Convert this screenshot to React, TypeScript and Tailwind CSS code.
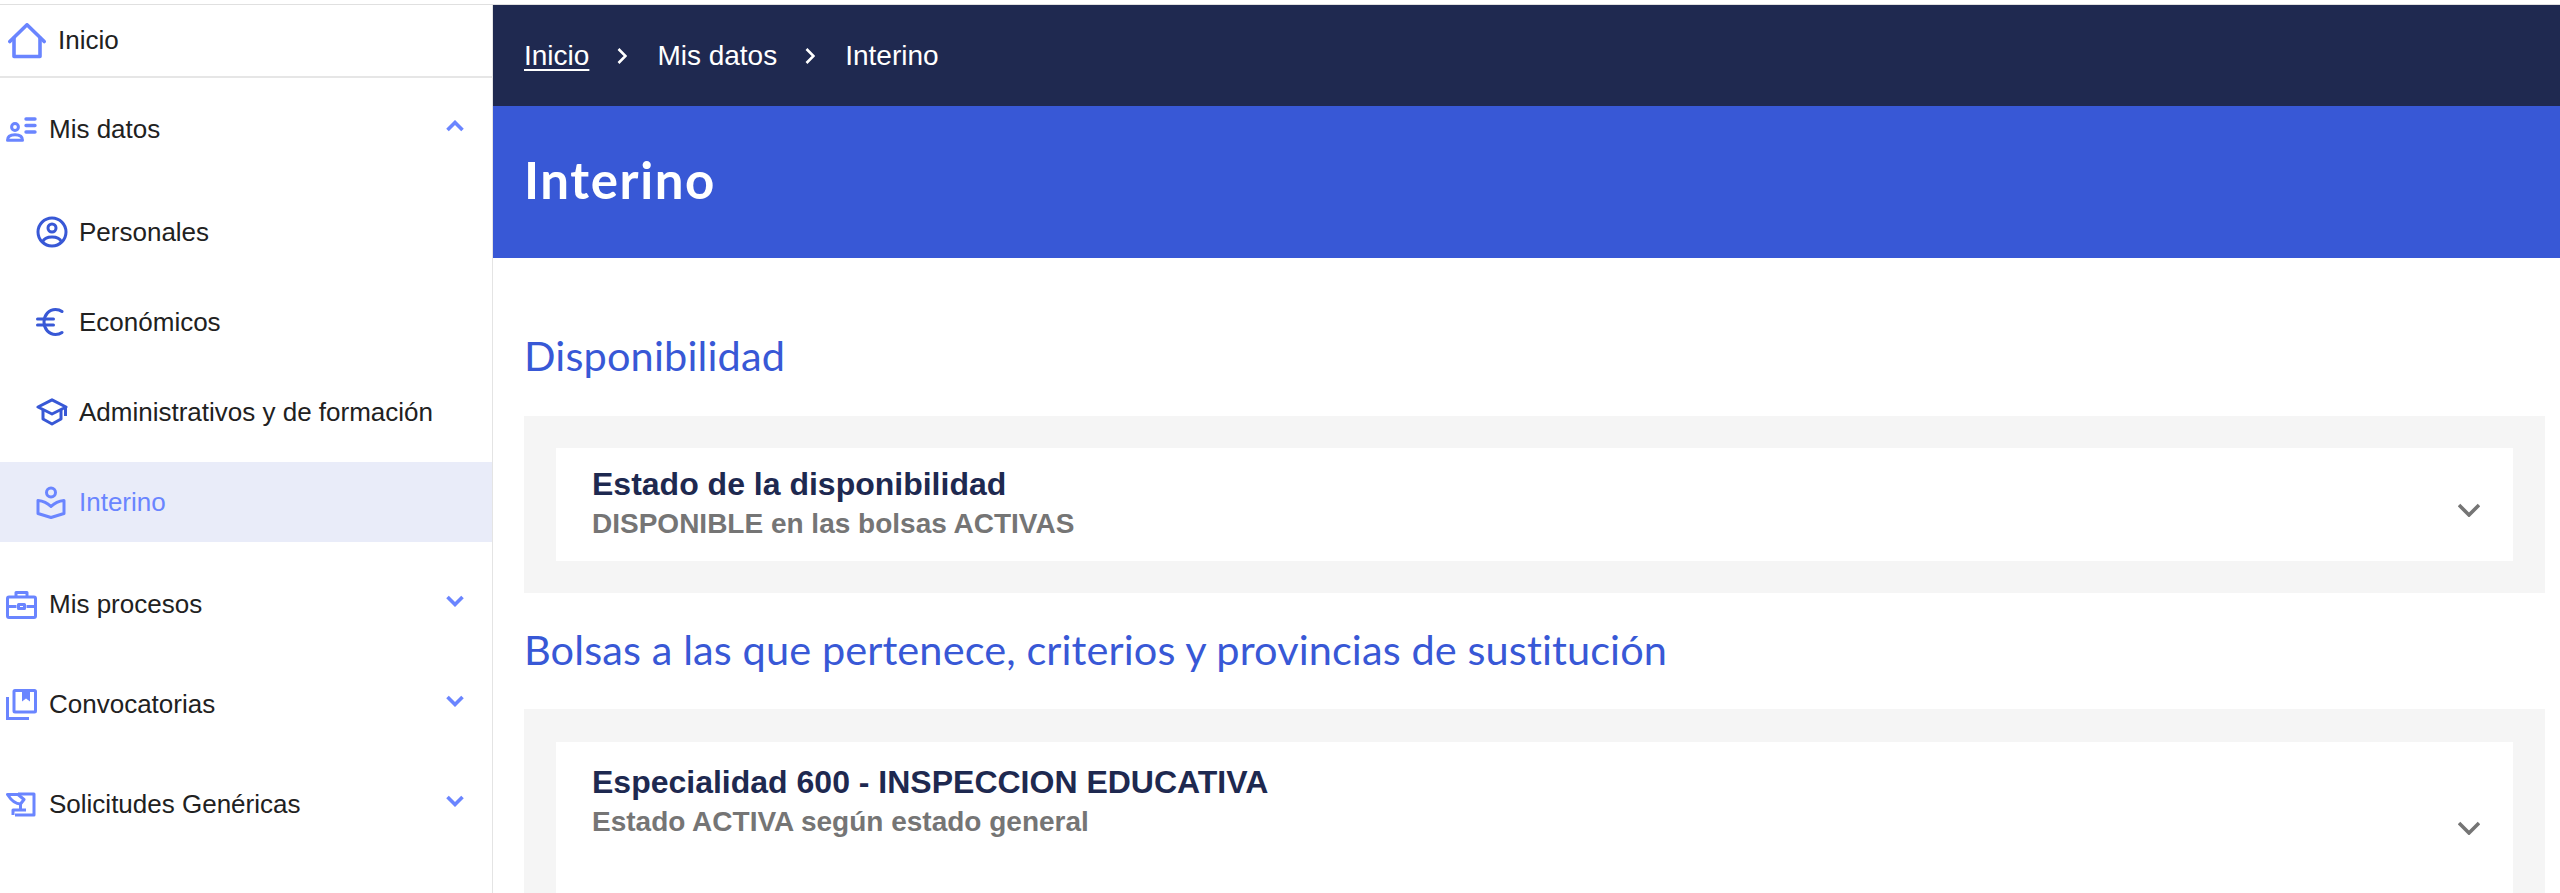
import React from "react";

const Home = () => (
  <svg width="38" height="36" viewBox="0 0 38 36" fill="none" stroke="#6a85ff" strokeWidth="3.600" strokeLinejoin="round" strokeLinecap="round" className="shrink-0">
    <path d="M1.800 18.500 19 1.800 36.200 18.500" />
    <path d="M6 15v18.500h26V15" />
  </svg>
);
const MisDatosIcon = () => (
  <svg width="31" height="25" viewBox="0 0 31 25" fill="none" stroke="#6a85ff" strokeWidth="3" strokeLinecap="round" className="shrink-0">
    <circle cx="9" cy="10" r="3.400" />
    <path d="M1.500 23.300c0-4 3-5.600 7.500-5.600s7.500 1.600 7.500 5.600z" strokeLinejoin="round" />
    <path d="M20 2h9M20 8.500h9M20 15h9" strokeWidth="3.400" />
  </svg>
);
const UserCircle = () => (
  <svg width="32" height="32" viewBox="0 0 32 32" fill="none" stroke="#3858d6" strokeWidth="3" className="shrink-0">
    <circle cx="16" cy="16" r="14" />
    <circle cx="16" cy="12" r="4" />
    <path d="M6.500 26c1.500-3.600 5-5 9.500-5s8 1.400 9.500 5" />
  </svg>
);
const Euro = () => (
  <svg width="28" height="28" viewBox="0 0 28 28" fill="none" stroke="#3858d6" strokeWidth="3" strokeLinecap="round" className="shrink-0">
    <path d="M26 3.500C24 2 22 1.500 19.500 1.500 13 1.500 8 7 8 14s5 12.500 11.500 12.500c2.500 0 4.500-.5 6.500-2" />
    <path d="M1.500 11h16M1.500 17h16" />
  </svg>
);
const Cap = () => (
  <svg width="32" height="28" viewBox="0 0 32 28" fill="none" stroke="#3858d6" strokeWidth="3" strokeLinejoin="round" className="shrink-0">
    <path d="M16 1.800 30 9 16 16 2 9z" />
    <path d="M7 12v9l9 5 9-5v-9" />
    <path d="M29.500 9v9" />
  </svg>
);
const BookUser = () => (
  <svg width="30" height="33" viewBox="0 0 30 33" fill="none" stroke="#6a85ff" strokeWidth="3" strokeLinejoin="round" className="shrink-0">
    <circle cx="15" cy="6.500" r="4.500" />
    <path d="M15 20.500C12 17.500 7 15 2 14.500V27.500L15 31.500L28 27.500V14.500C23 15 18 17.500 15 20.500z" />
  </svg>
);
const Briefcase = () => (
  <svg width="31" height="29" viewBox="0 0 31 29" fill="none" stroke="#6a85ff" strokeWidth="3" strokeLinejoin="round" className="shrink-0">
    <rect x="1.500" y="7" width="28" height="20.500" rx="1.500" />
    <path d="M10 7V2.500h11V7" />
    <path d="M1.500 16.500h9M20.500 16.500h9" />
    <rect x="12.500" y="14.500" width="6" height="4" />
  </svg>
);
const Library = () => (
  <svg width="31" height="31" viewBox="0 0 31 31" fill="none" stroke="#6a85ff" strokeWidth="3" className="shrink-0">
    <rect x="8" y="1.500" width="21.500" height="21.500" rx="1" />
    <path d="M1.500 8v21.500H23" />
    <path d="M16 1.500h8v11l-4-3-4 3z" fill="#6a85ff" stroke="none" />
  </svg>
);
const Solicitud = () => (
  <svg width="30" height="25" viewBox="0 0 30 25" fill="none" stroke="#6a85ff" strokeWidth="3" strokeLinejoin="round" className="shrink-0">
    <path d="M12 2h16v21H9" />
    <path d="M1.500 2.500H12l6 5-3.500 4.500C10 12 5 8 1.500 2.500z" />
    <path d="M14.500 12v6" />
    <path d="M7 23v-5h13" />
  </svg>
);
const Chev = ({ up }: { up?: boolean }) => (
  <svg width="18" height="12" viewBox="0 0 18 12" fill="none" stroke="#6a85ff" strokeWidth="3.600" className={up ? "rotate-180" : ""}>
    <path d="M1.500 2 9 9.500 16.500 2" />
  </svg>
);
const GrayChev = () => (
  <svg width="22" height="14" viewBox="0 0 22 14" fill="none" stroke="#757575" strokeWidth="3.600" className="shrink-0 mt-[11px]">
    <path d="M1 2 11 12 21 2" />
  </svg>
);
const Crumb = () => (
  <svg width="10" height="16" viewBox="0 0 10 16" fill="none" stroke="#ffffff" strokeWidth="2.600">
    <path d="M1.500 1 8.500 8 1.500 15" />
  </svg>
);

function TopItem({ icon, label, up, className }: { icon: React.ReactNode; label: string; up?: boolean; className: string }) {
  return (
    <div className={`flex items-center pl-[6px] pr-[28px] ${className}`}>
      <span className="w-[43px] flex items-center">{icon}</span>
      <span className="flex-1">{label}</span>
      <span className="mb-[6px] flex">
        <Chev up={up} />
      </span>
    </div>
  );
}

function SubItem({ icon, label, active }: { icon: React.ReactNode; label: string; active?: boolean }) {
  return (
    <div className={`h-[80px] flex items-center pl-[36px] ${active ? "bg-[#e9ecf9] text-[#6a85ff]" : ""}`}>
      <span className="w-[43px] flex items-center">{icon}</span>
      <span>{label}</span>
    </div>
  );
}

export default function App() {
  return (
    <div className="h-[893px] w-[2560px] overflow-hidden bg-white font-['Liberation_Sans',Arial,sans-serif] text-[#212121]">
      <div className="h-[5px] bg-white border-b border-[#e0e0e0]" />
      <div className="flex h-[888px]">
        <aside className="w-[493px] shrink-0 border-r border-[#e4e4e4] text-[26px]">
          <div className="h-[73px] flex items-center pl-[8px] border-b-2 border-[#e6e6e6]">
            <span className="w-[50px] flex items-center"><Home /></span>
            <span>Inicio</span>
          </div>
          <TopItem icon={<MisDatosIcon />} label="Mis datos" up className="h-[102px]" />
          <div className="pt-[12px] flex flex-col gap-[10px]">
            <SubItem icon={<UserCircle />} label="Personales" />
            <SubItem icon={<Euro />} label="Económicos" />
            <SubItem icon={<Cap />} label="Administrativos y de formación" />
            <SubItem icon={<BookUser />} label="Interino" active />
          </div>
          <div className="pt-[12px]">
            <TopItem icon={<Briefcase />} label="Mis procesos" className="h-[100px]" />
            <TopItem icon={<Library />} label="Convocatorias" className="h-[100px]" />
            <TopItem icon={<Solicitud />} label="Solicitudes Genéricas" className="h-[100px]" />
          </div>
        </aside>
        <main className="flex-1 min-w-0">
          <nav className="h-[101px] bg-[#1f2950] text-white text-[28px] flex items-center pl-[31px]">
            <span className="underline decoration-2 underline-offset-[4px]">Inicio</span>
            <span className="ml-[28px] mr-[30px] flex"><Crumb /></span>
            <span>Mis datos</span>
            <span className="ml-[28px] mr-[30px] flex"><Crumb /></span>
            <span>Interino</span>
          </nav>
          <div className="h-[152px] bg-[#3858d6] flex items-center pl-[31px] pb-[3px]">
            <h1 className="text-white text-[51px] font-bold font-['Lato',sans-serif] tracking-[1.6px]">Interino</h1>
          </div>
          <div className="pl-[31px] pr-[15px]">
            <h2 className="mt-[67px] mb-[31px] h-[60px] leading-[60px] text-[41.5px] text-[#3858d6] font-['Lato',sans-serif] tracking-[0.15px]">Disponibilidad</h2>
            <section className="bg-[#f5f5f5] p-[32px]">
              <div className="bg-white h-[113px] pl-[36px] pr-[33px] pt-[17px] flex">
                <div className="flex-1 font-bold leading-[39px]">
                  <div className="text-[#1e2950] text-[32px]">Estado de la disponibilidad</div>
                  <div className="text-[#757575] text-[28px]">DISPONIBLE en las bolsas ACTIVAS</div>
                </div>
                <div className="self-stretch flex items-center -mt-[17px]"><GrayChev /></div>
              </div>
            </section>
            <h2 className="mt-[26px] mb-[30px] h-[60px] leading-[60px] text-[41.5px] text-[#3858d6] font-['Lato',sans-serif] tracking-[0.1px]">Bolsas a las que pertenece, criterios y provincias de sustitución</h2>
            <section className="bg-[#f5f5f5] px-[32px] pt-[33px] pb-[32px]">
              <div className="bg-white h-[161px] pl-[36px] pr-[33px] pt-[20px] flex">
                <div className="flex-1 font-bold leading-[40px]">
                  <div className="text-[#1e2950] text-[32px]">Especialidad 600 - INSPECCION EDUCATIVA</div>
                  <div className="text-[#757575] text-[28px]">Estado ACTIVA según estado general</div>
                </div>
                <div className="self-stretch flex items-center -mt-[20px]"><GrayChev /></div>
              </div>
            </section>
          </div>
        </main>
      </div>
    </div>
  );
}
